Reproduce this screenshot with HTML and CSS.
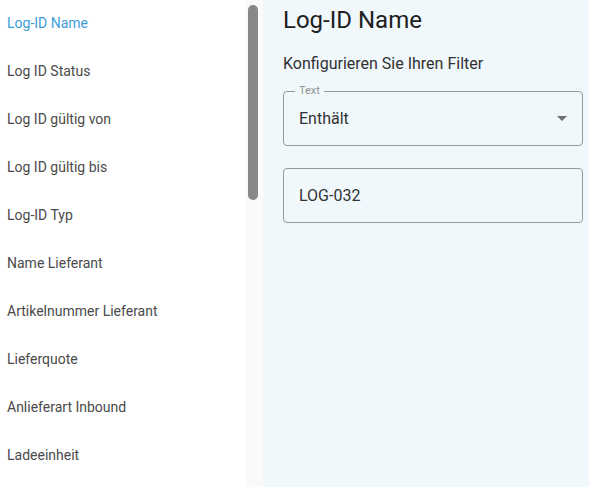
FILE: index.html
```html
<!DOCTYPE html>
<html lang="de">
<head>
<meta charset="utf-8">
<title>Filter</title>
<link rel="stylesheet" href="styles.css">
</head>
<body>
<div class="layout">
  <nav class="columns">
    <ul class="column-list">
      <li class="column-item active">Log-ID Name</li>
      <li class="column-item">Log ID Status</li>
      <li class="column-item">Log ID gültig von</li>
      <li class="column-item">Log ID gültig bis</li>
      <li class="column-item">Log-ID Typ</li>
      <li class="column-item">Name Lieferant</li>
      <li class="column-item">Artikelnummer Lieferant</li>
      <li class="column-item">Lieferquote</li>
      <li class="column-item">Anlieferart Inbound</li>
      <li class="column-item">Ladeeinheit</li>
    </ul>
  </nav>
  <div class="scrollbar"><div class="scrollbar-thumb"></div></div>
  <main class="filter-panel">
    <h1 class="filter-title">Log-ID Name</h1>
    <p class="filter-hint">Konfigurieren Sie Ihren Filter</p>
    <div class="field field-select">
      <span class="field-label">Text</span>
      <span class="field-value">Enthält</span>
      <svg class="select-arrow" width="10" height="5" viewBox="0 0 10 5"><path d="M0 0h10L5 5z" fill="#6f6f6f"/></svg>
    </div>
    <div class="field field-input">
      <span class="field-value">LOG-032</span>
    </div>
  </main>
</div>
</body>
</html>
```
FILE: styles.css
```css
html, body {
  margin: 0;
  padding: 0;
  height: 100%;
  overflow: hidden;
  font-family: Roboto, "Liberation Sans", sans-serif;
}

.layout {
  display: flex;
  height: 487px;
}

/* column picker */
.columns {
  width: 245px;
  flex: none;
  height: 100%;
  overflow: hidden;
  background: #fff;
}

.column-list {
  list-style: none;
  margin: 0;
  padding: 0;
}

.column-item {
  height: 48px;
  line-height: 47px;
  padding-left: 7px;
  font-size: 14px;
  color: #4a4a4a;
  white-space: nowrap;
}

.column-item.active {
  color: #3d9ed9;
}

/* list scrollbar */
.scrollbar {
  width: 18px;
  flex: none;
  background: #fafafa;
  padding: 5px 5px 0 3px;
  box-sizing: border-box;
}

.scrollbar-thumb {
  height: 195px;
  border-radius: 5px;
  background: #888;
}

/* filter editor */
.filter-panel {
  flex: 1;
  background: #f1f8fc;
  padding: 0 6px 0 20px;
  box-sizing: border-box;
}

.filter-title {
  margin: 0;
  font-size: 24px;
  font-weight: 400;
  line-height: 40px;
  color: #202020;
}

.filter-hint {
  margin: 12px 0 0;
  font-size: 16px;
  line-height: 24px;
  color: #303030;
}

.field {
  position: relative;
  box-sizing: border-box;
  border: 1px solid #999;
  border-radius: 4px;
  height: 55px;
  display: flex;
  align-items: center;
  padding: 0 15px;
  font-size: 16px;
  color: #333;
}

.field-select {
  margin-top: 15px;
}

.field-label {
  position: absolute;
  top: -7px;
  left: 11px;
  padding: 0 4px;
  font-size: 11px;
  line-height: 12px;
  color: #939393;
  background: #f1f8fc;
}

.field-value {
  flex: 1;
}

.field-input {
  margin-top: 22px;
}
```
